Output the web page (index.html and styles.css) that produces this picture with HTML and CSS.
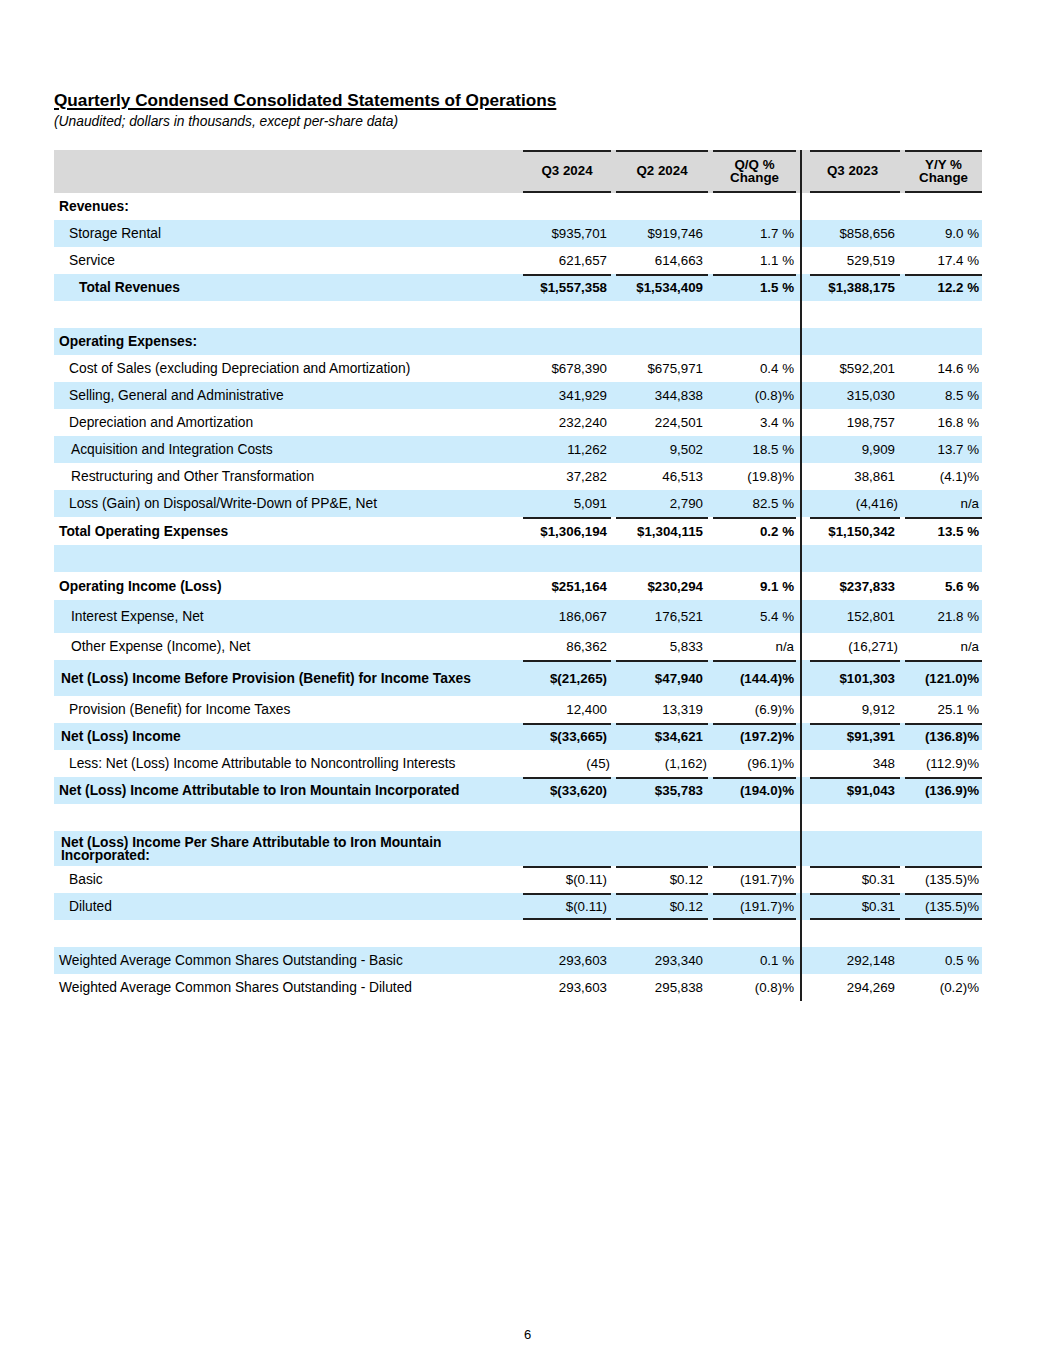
FILE: index.html
```html
<!DOCTYPE html>
<html lang="en">
<head>
<meta charset="utf-8">
<title>Quarterly Condensed Consolidated Statements of Operations</title>
<link rel="stylesheet" href="styles.css">
</head>
<body>
<div class="page">
  <h1 class="title">Quarterly Condensed Consolidated Statements of Operations</h1>
  <p class="subtitle">(Unaudited; dollars in thousands, except per-share data)</p>

  <table class="stmt">
    <colgroup>
      <col class="c-label"><col class="c-n1"><col class="c-n2"><col class="c-n3"><col class="c-dv"><col class="c-n4"><col class="c-n5">
    </colgroup>
    <tbody>
      <tr class="head rb">
        <td class="lbl"></td>
        <td class="hd">Q3 2024</td>
        <td class="hd">Q2 2024</td>
        <td class="hd">Q/Q %<br>Change</td>
        <td class="dv"></td>
        <td class="hd">Q3 2023</td>
        <td class="hd">Y/Y %<br>Change</td>
      </tr>
      <tr>
        <td class="lbl b i0">Revenues:</td><td></td><td></td><td></td><td class="dv"></td><td></td><td></td>
      </tr>
      <tr class="blue">
        <td class="lbl i1">Storage Rental</td><td class="n">$935,701</td><td class="n">$919,746</td><td class="n">1.7 %</td><td class="dv"></td><td class="n">$858,656</td><td class="n">9.0 %</td>
      </tr>
      <tr>
        <td class="lbl i1">Service</td><td class="n">621,657</td><td class="n">614,663</td><td class="n">1.1 %</td><td class="dv"></td><td class="n">529,519</td><td class="n">17.4 %</td>
      </tr>
      <tr class="blue rt">
        <td class="lbl b i3">Total Revenues</td><td class="n b">$1,557,358</td><td class="n b">$1,534,409</td><td class="n b">1.5 %</td><td class="dv"></td><td class="n b">$1,388,175</td><td class="n b">12.2 %</td>
      </tr>
      <tr>
        <td class="lbl"></td><td></td><td></td><td></td><td class="dv"></td><td></td><td></td>
      </tr>
      <tr class="blue">
        <td class="lbl b i0">Operating Expenses:</td><td></td><td></td><td></td><td class="dv"></td><td></td><td></td>
      </tr>
      <tr>
        <td class="lbl i1">Cost of Sales (excluding Depreciation and Amortization)</td><td class="n">$678,390</td><td class="n">$675,971</td><td class="n">0.4 %</td><td class="dv"></td><td class="n">$592,201</td><td class="n">14.6 %</td>
      </tr>
      <tr class="blue">
        <td class="lbl i1">Selling, General and Administrative</td><td class="n">341,929</td><td class="n">344,838</td><td class="n">(0.8)%</td><td class="dv"></td><td class="n">315,030</td><td class="n">8.5 %</td>
      </tr>
      <tr>
        <td class="lbl i1">Depreciation and Amortization</td><td class="n">232,240</td><td class="n">224,501</td><td class="n">3.4 %</td><td class="dv"></td><td class="n">198,757</td><td class="n">16.8 %</td>
      </tr>
      <tr class="blue">
        <td class="lbl i2">Acquisition and Integration Costs</td><td class="n">11,262</td><td class="n">9,502</td><td class="n">18.5 %</td><td class="dv"></td><td class="n">9,909</td><td class="n">13.7 %</td>
      </tr>
      <tr>
        <td class="lbl i2">Restructuring and Other Transformation</td><td class="n">37,282</td><td class="n">46,513</td><td class="n">(19.8)%</td><td class="dv"></td><td class="n">38,861</td><td class="n">(4.1)%</td>
      </tr>
      <tr class="blue">
        <td class="lbl i1">Loss (Gain) on Disposal/Write-Down of PP&amp;E, Net</td><td class="n">5,091</td><td class="n">2,790</td><td class="n">82.5 %</td><td class="dv"></td><td class="n hang">(4,416)</td><td class="n">n/a</td>
      </tr>
      <tr class="rt h28">
        <td class="lbl b i0">Total Operating Expenses</td><td class="n b">$1,306,194</td><td class="n b">$1,304,115</td><td class="n b">0.2 %</td><td class="dv"></td><td class="n b">$1,150,342</td><td class="n b">13.5 %</td>
      </tr>
      <tr class="blue">
        <td class="lbl"></td><td></td><td></td><td></td><td class="dv"></td><td></td><td></td>
      </tr>
      <tr class="h28">
        <td class="lbl b i0">Operating Income (Loss)</td><td class="n b">$251,164</td><td class="n b">$230,294</td><td class="n b">9.1 %</td><td class="dv"></td><td class="n b">$237,833</td><td class="n b">5.6 %</td>
      </tr>
      <tr class="blue h33">
        <td class="lbl i2">Interest Expense, Net</td><td class="n">186,067</td><td class="n">176,521</td><td class="n">5.4 %</td><td class="dv"></td><td class="n">152,801</td><td class="n">21.8 %</td>
      </tr>
      <tr>
        <td class="lbl i2">Other Expense (Income), Net</td><td class="n">86,362</td><td class="n">5,833</td><td class="n">n/a</td><td class="dv"></td><td class="n hang">(16,271)</td><td class="n">n/a</td>
      </tr>
      <tr class="blue rt h36">
        <td class="lbl b i05">Net (Loss) Income Before Provision (Benefit) for Income Taxes</td><td class="n b">$(21,265)</td><td class="n b">$47,940</td><td class="n b">(144.4)%</td><td class="dv"></td><td class="n b">$101,303</td><td class="n b">(121.0)%</td>
      </tr>
      <tr>
        <td class="lbl i1">Provision (Benefit) for Income Taxes</td><td class="n">12,400</td><td class="n">13,319</td><td class="n">(6.9)%</td><td class="dv"></td><td class="n">9,912</td><td class="n">25.1 %</td>
      </tr>
      <tr class="blue rt">
        <td class="lbl b i05">Net (Loss) Income</td><td class="n b">$(33,665)</td><td class="n b">$34,621</td><td class="n b">(197.2)%</td><td class="dv"></td><td class="n b">$91,391</td><td class="n b">(136.8)%</td>
      </tr>
      <tr>
        <td class="lbl i1">Less: Net (Loss) Income Attributable to Noncontrolling Interests</td><td class="n hang">(45)</td><td class="n hang">(1,162)</td><td class="n">(96.1)%</td><td class="dv"></td><td class="n">348</td><td class="n">(112.9)%</td>
      </tr>
      <tr class="blue rt">
        <td class="lbl b i0">Net (Loss) Income Attributable to Iron Mountain Incorporated</td><td class="n b">$(33,620)</td><td class="n b">$35,783</td><td class="n b">(194.0)%</td><td class="dv"></td><td class="n b">$91,043</td><td class="n b">(136.9)%</td>
      </tr>
      <tr>
        <td class="lbl"></td><td></td><td></td><td></td><td class="dv"></td><td></td><td></td>
      </tr>
      <tr class="blue h35">
        <td class="lbl b i05 wrap">Net (Loss) Income Per Share Attributable to Iron Mountain<br>Incorporated:</td><td></td><td></td><td></td><td class="dv"></td><td></td><td></td>
      </tr>
      <tr class="rt">
        <td class="lbl i1">Basic</td><td class="n">$(0.11)</td><td class="n">$0.12</td><td class="n">(191.7)%</td><td class="dv"></td><td class="n">$0.31</td><td class="n">(135.5)%</td>
      </tr>
      <tr class="blue rb rt">
        <td class="lbl i1">Diluted</td><td class="n">$(0.11)</td><td class="n">$0.12</td><td class="n">(191.7)%</td><td class="dv"></td><td class="n">$0.31</td><td class="n">(135.5)%</td>
      </tr>
      <tr>
        <td class="lbl"></td><td></td><td></td><td></td><td class="dv"></td><td></td><td></td>
      </tr>
      <tr class="blue">
        <td class="lbl i0">Weighted Average Common Shares Outstanding - Basic</td><td class="n">293,603</td><td class="n">293,340</td><td class="n">0.1 %</td><td class="dv"></td><td class="n">292,148</td><td class="n">0.5 %</td>
      </tr>
      <tr>
        <td class="lbl i0">Weighted Average Common Shares Outstanding - Diluted</td><td class="n">293,603</td><td class="n">295,838</td><td class="n">(0.8)%</td><td class="dv"></td><td class="n">294,269</td><td class="n">(0.2)%</td>
      </tr>
    </tbody>
  </table>

  <div class="pagenum">6</div>
</div>
</body>
</html>
```

FILE: styles.css
```css
html, body {
  margin: 0;
  padding: 0;
  background: #ffffff;
}

.page {
  padding: 93px 0 0 54px;
  font-family: "Liberation Sans", Arial, sans-serif;
  color: #000000;
}

.title {
  margin: 0;
  font-size: 17.2px;
  line-height: 15px;
  font-weight: bold;
  text-decoration: underline;
  text-underline-offset: 2px;
  text-decoration-thickness: 1.5px;
}

.subtitle {
  margin: 6px 0 0;
  font-size: 13.8px;
  line-height: 16px;
  font-style: italic;
}

.stmt {
  margin-top: 20px;
  border-collapse: separate;
  border-spacing: 0;
  table-layout: fixed;
  width: 928px;
  font-size: 13.33px;
}

.c-label { width: 464px; }
.c-n1 { width: 93px; }
.c-n2 { width: 97px; }
.c-n3 { width: 88px; }
.c-dv { width: 9px; }
.c-n4 { width: 95px; }
.c-n5 { width: 82px; }

.stmt td {
  padding: 0;
  height: 27px;
  line-height: 15px;
  vertical-align: middle;
  white-space: nowrap;
}

.stmt td.lbl {
  font-size: 13.8px;
}

.stmt tr.h28 td { height: 28px; }
.stmt tr.h33 td { height: 33px; }
.stmt tr.h35 td { height: 35px; }
.stmt tr.h36 td { height: 36px; }

.stmt tr.blue { background-color: #cdecfc; }
.stmt tr.head { background-color: #d9d9d9; }

.stmt tr.head td { height: 43px; }

.hd {
  text-align: center;
  font-weight: bold;
  line-height: 12.5px !important;
  padding-left: 5px !important;
}

.lbl.i0 { padding-left: 5px; }
.lbl.i05 { padding-left: 7px; }
.lbl.i1 { padding-left: 15px; }
.lbl.i2 { padding-left: 17px; }
.lbl.i3 { padding-left: 25px; }

.stmt td.lbl.wrap { line-height: 13px; }

.b { font-weight: bold; }

.n { text-align: right; }

.stmt td.n:nth-child(2) { padding-right: 4px; }
.stmt td.n:nth-child(3) { padding-right: 5px; }
.stmt td.n:nth-child(4) { padding-right: 2px; }
.stmt td.n:nth-child(6) { padding-right: 5px; }
.stmt td.n:nth-child(7) { padding-right: 3px; }

.stmt td.n.hang:nth-child(2) { padding-right: 1px; }
.stmt td.n.hang:nth-child(3) { padding-right: 1px; }
.stmt td.n.hang:nth-child(6) { padding-right: 2px; }

/* vertical divider between the Q/Q and the Y/Y block */
.stmt td.dv {
  background-image: linear-gradient(#1e1e1e, #1e1e1e);
  background-repeat: no-repeat;
  background-position: 4px 0;
  background-size: 2px 100%;
}

/* horizontal rules on numeric columns */
.stmt tr.rt td:not(.lbl):not(.dv) {
  background-image: linear-gradient(#1e1e1e, #1e1e1e);
  background-repeat: no-repeat;
  background-position: right top;
  background-size: calc(100% - 5px) 2px;
}

.stmt tr.rb td:not(.lbl):not(.dv) {
  background-image: linear-gradient(#1e1e1e, #1e1e1e);
  background-repeat: no-repeat;
  background-position: right bottom;
  background-size: calc(100% - 5px) 2px;
}

.stmt tr.rt.rb td:not(.lbl):not(.dv),
.stmt tr.head td:not(.lbl):not(.dv) {
  background-image: linear-gradient(#1e1e1e, #1e1e1e), linear-gradient(#1e1e1e, #1e1e1e);
  background-repeat: no-repeat, no-repeat;
  background-position: right top, right bottom;
  background-size: calc(100% - 5px) 2px, calc(100% - 5px) 2px;
}

.stmt tr.rt td:nth-child(6),
.stmt tr.rb td:nth-child(6),
.stmt tr.head td:nth-child(6) {
  background-size: 100% 2px, 100% 2px;
}

.stmt tr.head td.hd:nth-child(6) {
  padding-left: 0 !important;
}

.pagenum {
  margin: 326px 0 0 -54px;
  width: 1055px;
  text-align: center;
  font-size: 13px;
  line-height: 16px;
}
```
